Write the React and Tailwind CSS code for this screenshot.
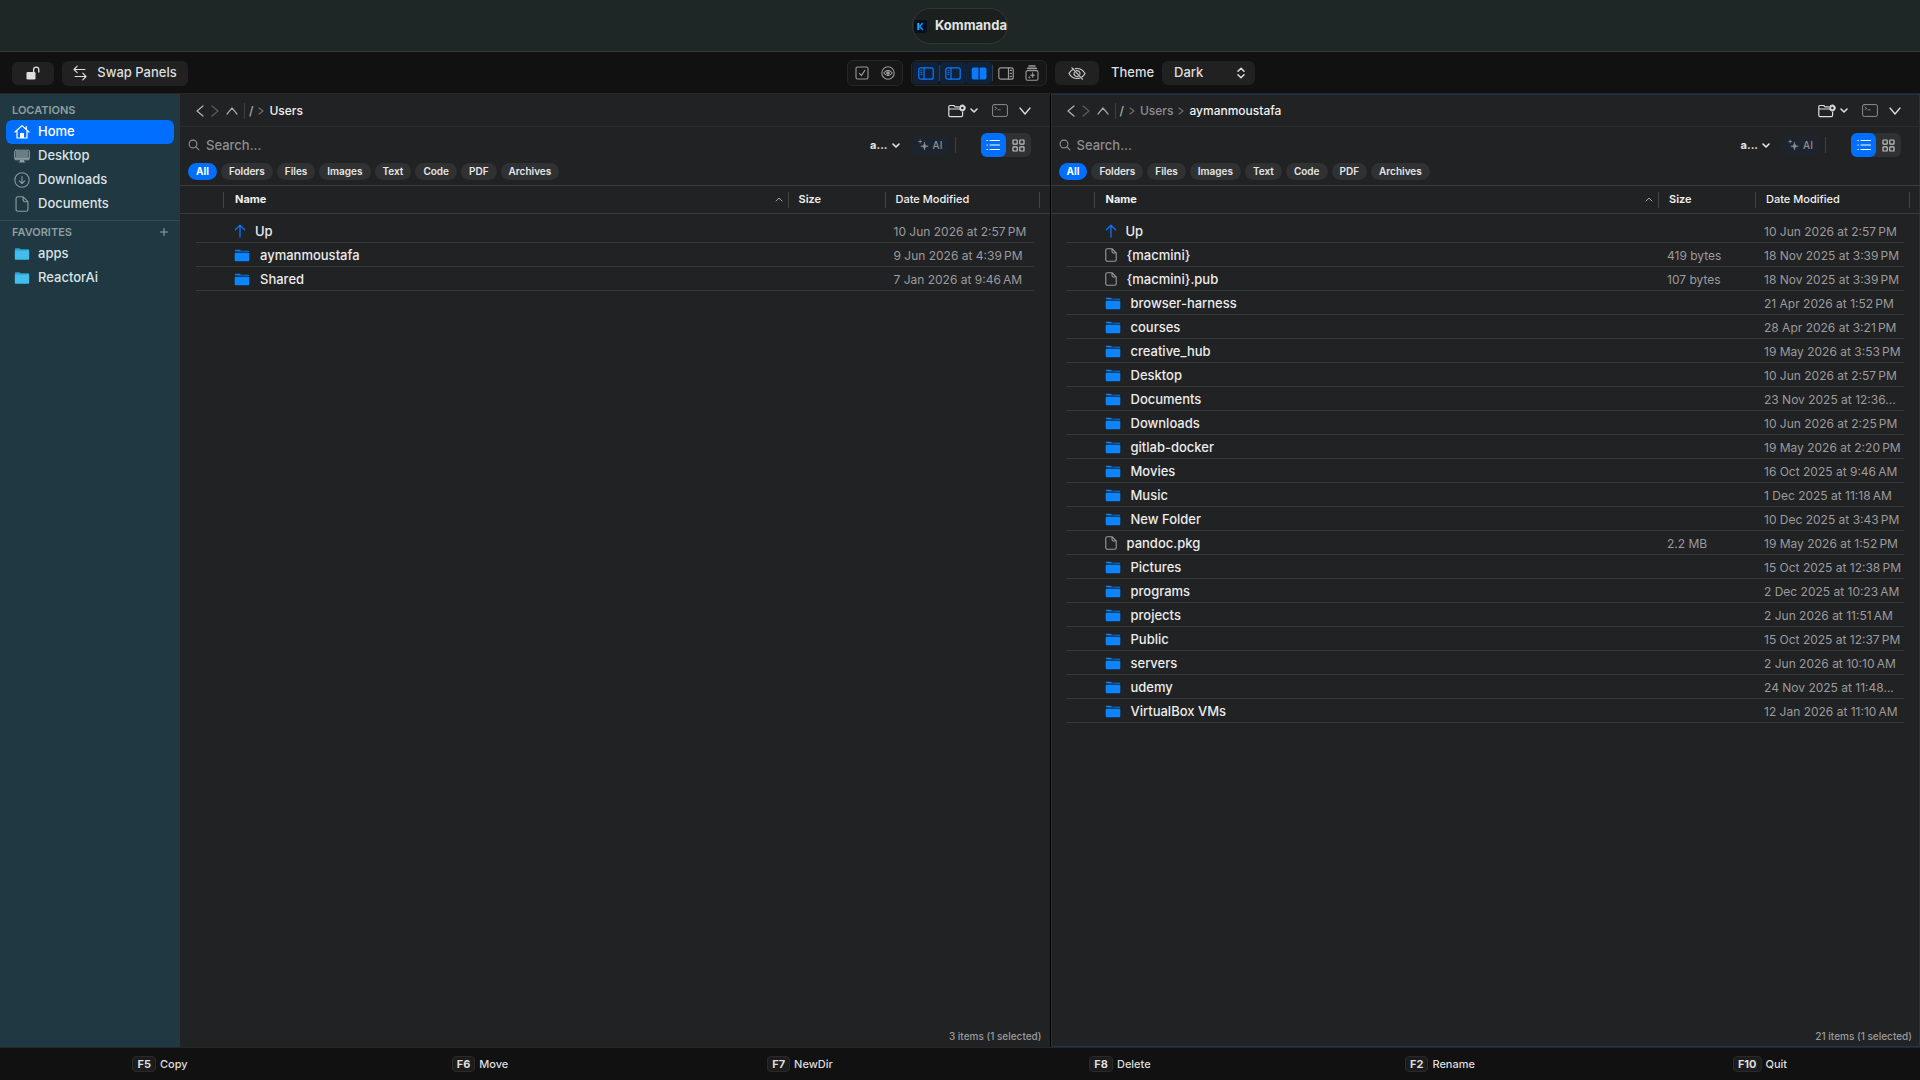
import React from "react";

const Svg = ({ w, h, vb, className = "", sw = 1, children }) => (
  <svg
    width={w}
    height={h}
    viewBox={vb || `0 0 ${w} ${h}`}
    fill="none"
    stroke="currentColor"
    strokeWidth={sw}
    strokeLinecap="round"
    strokeLinejoin="round"
    className={`shrink-0 ${className}`}
    aria-hidden="true"
  >
    {children}
  </svg>
);

/* ---------- icons ---------- */

const AppIcon = () => (
  <Svg w={13} h={13}>
    <rect width="13" height="13" rx="2" fill="#03101f" stroke="none" />
    <path d="M4.3 3v7" stroke="#1fa8ff" strokeWidth="2" strokeLinecap="butt" />
    <path d="M8.8 3L5.6 6.4 8.9 10" stroke="#1684e8" strokeWidth="1.7" strokeLinecap="butt" />
  </Svg>
);

const LockOpenIcon = () => (
  <Svg w={14} h={14} sw={1.3}>
    <rect x="0.5" y="6" width="9" height="7.5" rx="1.3" fill="currentColor" stroke="none" />
    <path d="M7.6 6V3.8a2.6 2.6 0 0 1 5.2 0V6" />
  </Svg>
);

const SwapIcon = () => (
  <Svg w={14} h={16} sw={1.1}>
    <path d="M1 4.5h11M4.2 1.2L1 4.5l3.2 3.2M2 11.5h11M9.8 8.2l3.2 3.3-3.2 3.3" />
  </Svg>
);

const CheckSquareIcon = () => (
  <Svg w={14} h={14} sw={1.1}>
    <rect x="1" y="1" width="12" height="12" rx="1.5" />
    <path d="M4.4 7.4l2 2.2 3.4-5.2" />
  </Svg>
);

const EyeCircleIcon = () => (
  <Svg w={14} h={14} sw={1.1}>
    <circle cx="7" cy="7" r="6.2" />
    <path d="M2.8 7c1.3-1.8 2.7-2.6 4.2-2.6S9.900 5.200 11.200 7C9.900 8.800 8.500 9.600 7 9.600S4.100 8.800 2.800 7z" />
    <circle cx="7" cy="7" r="1.3" fill="currentColor" />
  </Svg>
);

const SidebarLeftIcon = () => (
  <Svg w={16} h={13} sw={1.2}>
    <rect x="0.8" y="0.8" width="14.4" height="11.4" rx="2" />
    <path d="M6 1v11" />
    <path d="M2.8 3.4h1.200M2.8 5.400h1.200M2.8 7.400h1.200" strokeWidth="0.900" />
  </Svg>
);

const SplitIcon = () => (
  <Svg w={16} h={13}>
    <path
      d="M2.500 0.500h5v12h-5a1.800 1.800 0 0 1-1.800-1.800V2.300A1.800 1.800 0 0 1 2.500 0.500zM8.700 0.500h5a1.800 1.800 0 0 1 1.800 1.800v8.400a1.800 1.800 0 0 1-1.800 1.800h-5z"
      fill="currentColor"
      stroke="none"
    />
  </Svg>
);

const SidebarRightIcon = () => (
  <Svg w={16} h={13} sw={1.2}>
    <rect x="0.8" y="0.8" width="14.4" height="11.4" rx="2" />
    <path d="M10.500 1v11M12.300 3.400h1.100M12.300 6.400h1.100M12.300 9.400h1.100" />
  </Svg>
);

const StackIcon = () => (
  <Svg w={14} h={16} sw={1.1}>
    <path d="M4 1h6" strokeWidth="1.4" />
    <path d="M2.600 3.400h8.800" strokeWidth="1.600" />
    <rect x="1" y="5.600" width="12" height="9.600" rx="1.500" />
    <path d="M7.600 7.400c.2 1.800.9 2.600 2.600 2.800-1.700.2-2.400 1-2.600 2.800-.2-1.800-.9-2.600-2.600-2.800 1.700-.2 2.400-1 2.600-2.800z" fill="currentColor" strokeWidth="0.400" />
    <path d="M4.400 11.600v1.600M3.600 12.400h1.600" strokeWidth="0.700" />
  </Svg>
);

const EyeOffIcon = () => (
  <Svg w={18} h={13} sw={1.2}>
    <path d="M5.400 2.300C3.500 3.200 2 4.700 1 6.500c1.900 3.300 4.700 5 8 5 1.100 0 2.100-.2 3-.5M7.300 1.700c.5-.1 1.100-.2 1.700-.2 3.300 0 6.100 1.700 8 5-.8 1.400-1.800 2.500-3 3.400" />
    <path d="M6.300 5.400a3 3 0 0 0 3.900 3.900M8.400 3.600a3 3 0 0 1 3.500 3.600M4 .8l10.400 11.400" />
  </Svg>
);

const UpDownIcon = () => (
  <Svg w={8} h={12} sw={1.5}>
    <path d="M1 4.200l3-3 3 3M1 7.800l3 3 3-3" />
  </Svg>
);

const HomeIcon = () => (
  <Svg w={16} h={16} sw={1.2}>
    <path d="M1 8l7-6.400L15 8M3 6.700V14h10V6.700M12.300 5V2.600" />
    <path d="M6 14V9h4v5z" fill="currentColor" stroke="none" />
  </Svg>
);

const DesktopIcon = () => (
  <Svg w={16} h={14}>
    <rect x="0.600" y="1.200" width="14.800" height="9.600" rx="1.200" />
    <path d="M1.600 2h12.800v6.600H1.600z" fill="currentColor" stroke="none" opacity="0.700" />
    <path d="M1 8.600h14v2H1zM6 11h4v1.600h1.200v.8H4.800v-.8H6z" fill="currentColor" stroke="none" />
  </Svg>
);

const DownloadIcon = () => (
  <Svg w={16} h={16} sw={1.100}>
    <circle cx="8" cy="8" r="7.200" />
    <path d="M8 4.500v7M5.300 8.900L8 11.500l2.700-2.600" />
  </Svg>
);

const DocIcon = ({ small }) => (
  <Svg w={small ? 12 : 16} h={small ? 14 : 16} vb={small ? "0 0 12 14" : "-1 0 14 14"} sw={small ? 1.1 : 1}>
    <path d="M7 .7H2.300A1.500 1.500 0 0 0 .8 2.200v9.600a1.500 1.500 0 0 0 1.500 1.500h7.400a1.500 1.500 0 0 0 1.500-1.500V5zM7 .7V3.500A1.500 1.500 0 0 0 8.500 5h2.700" />
  </Svg>
);

const CyanFolderIcon = () => (
  <Svg w={16} h={14}>
    <path d="M1 1.200h4.400l1.200 1H15v2H1z" fill="#2b9fca" stroke="none" />
    <path d="M.8 3.400h14.400v8.400a.9.9 0 0 1-.9.900H1.700a.9.900 0 0 1-.9-.9z" fill="#43bdec" stroke="none" />
  </Svg>
);

const BlueFolderIcon = () => (
  <Svg w={16} h={13}>
    <path d="M.7 2.200c0-.8.500-1.400 1.300-1.400h3.300c.6 0 .8.200 1.300.6.300.2.500.3 1 .3H14c.8 0 1.300.4 1.300 1.100z" fill="#0a84ff" stroke="none" />
    <path d="M.7 4h14.600v6.900c0 .8-.5 1.300-1.300 1.300H2c-.8 0-1.300-.5-1.300-1.300z" fill="#0a84ff" stroke="none" />
    <path d="M1.500 3.500h13" stroke="#14406f" strokeWidth="1" strokeLinecap="butt" />
  </Svg>
);

const UpArrowIcon = () => (
  <Svg w={12} h={14} sw={1.300}>
    <path d="M6 13V1.200M1.400 5.800L6 1.200l4.600 4.600" />
  </Svg>
);

const Chevron = ({ dir, w, h, sw = 1.200, className }) => {
  const paths = {
    left: `M${w - 1} 1L1 ${h / 2}L${w - 1} ${h - 1}`,
    right: `M1 1L${w - 1} ${h / 2}L1 ${h - 1}`,
    up: `M1 ${h - 1}L${w / 2} 1L${w - 1} ${h - 1}`,
    down: `M1 1L${w / 2} ${h - 1}L${w - 1} 1`,
  };
  return (
    <Svg w={w} h={h} sw={sw} className={className}>
      <path d={paths[dir]} />
    </Svg>
  );
};

const FolderGearIcon = () => (
  <Svg w={18} h={14} sw={1.200}>
    <path d="M10.500 2.800H7L5.800 1.500H2A1.300 1.300 0 0 0 .8 2.800v8.500A1.400 1.400 0 0 0 2.200 12.700h11a1.400 1.400 0 0 0 1.400-1.400V8M1 5h9.500" />
    <circle cx="14.300" cy="4" r="2.100" strokeWidth="1.700" />
    <circle cx="14.300" cy="4" r="3.100" strokeWidth="0.900" strokeDasharray="1.200 1.200" />
  </Svg>
);

const TerminalIcon = () => (
  <Svg w={16} h={13}>
    <rect x="0.600" y="0.600" width="14.800" height="11.800" rx="1.600" />
    <path d="M3 3l1.800 1.300L3 5.600M6 5.800h2.200" strokeWidth="0.900" />
  </Svg>
);

const SearchIcon = () => (
  <Svg w={12} h={12} sw={1.100}>
    <circle cx="5" cy="5" r="3.900" />
    <path d="M7.900 7.900l3 3" />
  </Svg>
);

const SparkleIcon = () => (
  <Svg w={11} h={12} sw={0.600}>
    <path d="M6.500 3.400c.3 2.600 1.100 3.500 3.700 3.800-2.600.3-3.400 1.200-3.700 3.800-.3-2.600-1.100-3.500-3.700-3.800 2.600-.3 3.400-1.200 3.700-3.800z" fill="currentColor" />
    <path d="M2.200 1v3M.7 2.500h3" strokeWidth="0.800" />
  </Svg>
);

const ListIcon = () => (
  <Svg w={14} h={12} sw={1.200}>
    <path d="M4 1.500h9.400M4 6h9.400M4 10.500h9.400M.9 1.500h.4M.9 6h.4M.9 10.500h.4" />
  </Svg>
);

const GridIcon = () => (
  <Svg w={13} h={13} sw={1.200}>
    <rect x="1" y="1" width="4.200" height="4.200" rx="0.600" />
    <rect x="7.800" y="1" width="4.200" height="4.200" rx="0.600" />
    <rect x="1" y="7.800" width="4.200" height="4.200" rx="0.600" />
    <rect x="7.800" y="7.800" width="4.200" height="4.200" rx="0.600" />
  </Svg>
);

/* ---------- data ---------- */

const NNBSP = "\u202f";
const f = (name, date, time, kind = "folder", size = "") => ({
  name,
  date: `${date} at ${time.replace(" ", NNBSP)}`,
  kind,
  size,
});

const leftRows = [
  f("Up", "10 Jun 2026", "2:57 PM", "up"),
  f("aymanmoustafa", "9 Jun 2026", "4:39 PM"),
  f("Shared", "7 Jan 2026", "9:46 AM"),
];

const rightRows = [
  f("Up", "10 Jun 2026", "2:57 PM", "up"),
  f("{macmini}", "18 Nov 2025", "3:39 PM", "file", "419 bytes"),
  f("{macmini}.pub", "18 Nov 2025", "3:39 PM", "file", "107 bytes"),
  f("browser-harness", "21 Apr 2026", "1:52 PM"),
  f("courses", "28 Apr 2026", "3:21 PM"),
  f("creative_hub", "19 May 2026", "3:53 PM"),
  f("Desktop", "10 Jun 2026", "2:57 PM"),
  f("Documents", "23 Nov 2025", "12:36..."),
  f("Downloads", "10 Jun 2026", "2:25 PM"),
  f("gitlab-docker", "19 May 2026", "2:20 PM"),
  f("Movies", "16 Oct 2025", "9:46 AM"),
  f("Music", "1 Dec 2025", "11:18 AM"),
  f("New Folder", "10 Dec 2025", "3:43 PM"),
  f("pandoc.pkg", "19 May 2026", "1:52 PM", "file", "2.2 MB"),
  f("Pictures", "15 Oct 2025", "12:38 PM"),
  f("programs", "2 Dec 2025", "10:23 AM"),
  f("projects", "2 Jun 2026", "11:51 AM"),
  f("Public", "15 Oct 2025", "12:37 PM"),
  f("servers", "2 Jun 2026", "10:10 AM"),
  f("udemy", "24 Nov 2025", "11:48..."),
  f("VirtualBox VMs", "12 Jan 2026", "11:10 AM"),
];

const filters = ["All", "Folders", "Files", "Images", "Text", "Code", "PDF", "Archives"];

const shortcuts = [
  ["F5", "Copy"],
  ["F6", "Move"],
  ["F7", "NewDir"],
  ["F8", "Delete"],
  ["F2", "Rename"],
  ["F10", "Quit"],
];

/* ---------- parts ---------- */

const ToolButton = ({ label, active, children }) => (
  <button
    type="button"
    aria-label={label}
    className={`flex h-[22px] w-[26px] items-center justify-center rounded ${
      active ? "bg-[#10223a] text-[#0a7aff]" : "text-[#9a9a9a]"
    }`}
  >
    {children}
  </button>
);

const Toolbar = () => (
  <div className="flex h-[42px] shrink-0 items-center border-b border-[#262626] bg-[#111111] pl-3 pr-1.5 pt-px text-[13px] font-medium text-[#dedede]">
    <div className="flex items-center gap-2">
      <button type="button" aria-label="Unlock" className="flex h-[23px] w-[42px] items-center justify-center rounded-md bg-[#212121]">
        <LockOpenIcon />
      </button>
      <button type="button" className="flex h-[25px] w-[126px] items-center justify-center gap-2.5 rounded-md bg-[#212121]">
        <SwapIcon />
        Swap Panels
      </button>
    </div>
    <div className="flex-1" />
    <div className="flex items-center gap-2">
      <div className="flex h-[26px] items-center rounded-md border border-[#262626] bg-[#171717] px-px">
        <ToolButton label="Select"><CheckSquareIcon /></ToolButton>
        <ToolButton label="Preview"><EyeCircleIcon /></ToolButton>
      </div>
      <div className="flex h-[26px] items-center rounded-md border border-[#262626] bg-[#171717] px-px">
        <ToolButton label="Sidebar" active><SidebarLeftIcon /></ToolButton>
        <span className="h-4 w-px bg-[#33404f]" />
        <ToolButton label="Left panel" active><SidebarLeftIcon /></ToolButton>
        <ToolButton label="Dual panel" active><SplitIcon /></ToolButton>
        <span className="h-4 w-px bg-[#33404f]" />
        <ToolButton label="Inspector"><SidebarRightIcon /></ToolButton>
        <ToolButton label="Collections"><StackIcon /></ToolButton>
      </div>
      <button type="button" aria-label="Hide hidden files" className="flex h-6 w-11 items-center justify-center rounded-md bg-[#212121] text-[#c9c9c9]">
        <EyeOffIcon />
      </button>
      <label htmlFor="theme" className="pl-1">Theme</label>
      <div className="grid h-6 w-[93px] items-center rounded-md bg-[#212121]">
        <select id="theme" className="col-start-1 row-start-1 h-6 appearance-none bg-transparent pl-3 outline-none">
          <option>Dark</option>
        </select>
        <span className="pointer-events-none col-start-1 row-start-1 mr-2.5 justify-self-end">
          <UpDownIcon />
        </span>
      </div>
    </div>
    <div className="flex-1" />
  </div>
);

const SideItem = ({ icon, label, active }) => (
  <li>
    <a
      href="#"
      className={`mx-1.5 flex h-6 items-center gap-2 rounded-md px-2 ${
        active ? "bg-[#006fff] text-white" : "text-[#dce2e4]"
      }`}
    >
      <span className={`flex w-4 justify-center ${active ? "text-white" : "text-[#8b9aa0]"}`}>{icon}</span>
      {label}
    </a>
  </li>
);

const Sidebar = () => (
  <aside className="w-[180px] shrink-0 bg-[#1f3842] text-[13px] font-medium">
    <h2 className="flex h-[25px] items-center px-3 pt-1.5 text-[11px] font-semibold text-[#909ea3]">LOCATIONS</h2>
    <ul>
      <SideItem icon={<HomeIcon />} label="Home" active />
      <SideItem icon={<DesktopIcon />} label="Desktop" />
      <SideItem icon={<DownloadIcon />} label="Downloads" />
      <SideItem icon={<DocIcon />} label="Documents" />
    </ul>
    <div className="mt-1 flex h-[22px] items-center justify-between border-t border-[#344b55] px-3 pt-px text-[#909ea3]">
      <h2 className="text-[11px] font-semibold">FAVORITES</h2>
      <button type="button" aria-label="Add favorite">
        <Svg w={8} h={8} sw={1.100}><path d="M4 .5v7M.5 4h7" /></Svg>
      </button>
    </div>
    <ul>
      <SideItem icon={<CyanFolderIcon />} label="apps" />
      <SideItem icon={<CyanFolderIcon />} label="ReactorAi" />
    </ul>
  </aside>
);

const NameCell = ({ row }) => (
  <div className="flex items-center pl-2.5 text-[13px] font-medium text-[#ececec]">
    {row.kind === "up" && <span className="w-[21px] text-[#0a75ff]"><UpArrowIcon /></span>}
    {row.kind === "file" && <span className="w-[22px] text-[#9a9a9a]"><DocIcon small /></span>}
    {row.kind === "folder" && <span className="w-[26px]"><BlueFolderIcon /></span>}
    {row.name}
  </div>
);

const FileTable = ({ rows }) => (
  <table className="w-full table-fixed border-separate border-spacing-0 text-left">
    <colgroup>
      <col className="w-4" />
      <col className="w-7" />
      <col />
      <col className="w-[97px]" />
      <col className="w-[148px]" />
      <col className="w-1.5" />
      <col className="w-2.5" />
    </colgroup>
    <thead className="text-[11px] text-[#f0f0f0]">
      <tr className="h-[29px]">
        <td colSpan={2} className="border-y border-[#3a3b3d] p-0">
          <div className="ml-auto h-4 w-px bg-[#434446]" />
        </td>
        <th scope="col" className="border-y border-[#3a3b3d] p-0 font-bold">
          <div className="flex h-4 items-center justify-between border-r border-[#434446] pl-[11px] pr-[5px]">
            Name
            <Chevron dir="up" w={8} h={5} sw={1} className="text-[#a5a5a5]" />
          </div>
        </th>
        <th scope="col" className="border-y border-[#3a3b3d] p-0 font-semibold">
          <div className="flex h-4 items-center border-r border-[#434446] pl-2.5">Size</div>
        </th>
        <th scope="col" colSpan={2} className="border-y border-[#3a3b3d] p-0 font-medium">
          <div className="flex h-4 items-center border-r border-[#434446] pl-2.5">Date Modified</div>
        </th>
        <td className="border-y border-[#3a3b3d] p-0" />
      </tr>
    </thead>
    <tbody className="text-xs text-[#9b9b9d]">
      <tr className="h-[5px]"><td colSpan={7} className="p-0" /></tr>
      {rows.map((row) => (
        <tr key={row.name} className="h-6">
          <td className="p-0" />
          <td className="border-b border-[#38393b] p-0" />
          <td className="border-b border-[#38393b] p-0 pt-0.5"><NameCell row={row} /></td>
          <td className="border-b border-[#38393b] p-0 pl-2 pt-0.5">{row.size}</td>
          <td className="whitespace-nowrap border-b border-[#38393b] p-0 pl-2 pt-0.5">{row.date}</td>
          <td colSpan={2} className="p-0" />
        </tr>
      ))}
    </tbody>
  </table>
);

const Panel = ({ path, rows, status, active }) => (
  <section
    className={`flex min-w-0 flex-1 flex-col bg-[#212224] ${
      active ? "shadow-[inset_0_0_0_1px_#1b3355]" : "border-r border-black"
    }`}
  >
    <div className="flex h-[33px] items-center justify-between border-b border-[#2a2b2d] pl-4 pr-[19px] pt-px">
      <nav className="flex items-center text-xs font-medium text-[#8e8e90]">
        <button type="button" aria-label="Back" className="text-[#b5b5b5]"><Chevron dir="left" w={8} h={12} /></button>
        <button type="button" aria-label="Forward" className="ml-[7px] text-[#5c5d5f]"><Chevron dir="right" w={8} h={12} /></button>
        <button type="button" aria-label="Parent folder" className="ml-[7px] text-[#a5a5a5]"><Chevron dir="up" w={12} h={8} /></button>
        <span className="ml-1.5 mr-1 h-4 w-px bg-[#3f4042]" />
        {path.map((part, i) => (
          <React.Fragment key={part}>
            {i > 0 && <Chevron dir="right" w={6} h={8} className="mx-[5px] text-[#6c6c6e]" />}
            <a href="#" className={i === path.length - 1 ? "text-[#f0f0f0]" : i === 0 ? "text-[#b0b0b0]" : ""}>{part}</a>
          </React.Fragment>
        ))}
      </nav>
      <div className="flex items-center text-[#dcdcdc]">
        <button type="button" aria-label="Folder actions" className="flex items-center gap-1">
          <FolderGearIcon />
          <Chevron dir="down" w={8} h={5} sw={1.600} />
        </button>
        <button type="button" aria-label="Terminal" className="ml-[14px] text-[#8e8e90]"><TerminalIcon /></button>
        <button type="button" aria-label="More" className="ml-[11px]"><Chevron dir="down" w={12} h={8} sw={1.300} /></button>
      </div>
    </div>

    <div className="flex h-9 items-center pl-2 pr-[19px]">
      <label className="flex flex-1 items-center gap-1.5 text-[#8e8e90]">
        <SearchIcon />
        <input
          type="text"
          placeholder="Search..."
          aria-label="Search"
          className="w-full bg-transparent pt-px text-[13px] font-medium outline-none placeholder:text-[#8e8e90]"
        />
      </label>
      <button type="button" className="flex items-center gap-1 text-[11px] font-bold text-[#e6e6e6]">
        a...
        <Chevron dir="down" w={8} h={5} sw={1.600} />
      </button>
      <button type="button" className="ml-3 flex h-[19px] w-[37px] items-center justify-center gap-1 rounded bg-[#1e242e] text-[10px] font-medium text-[#8b8f96]">
        <SparkleIcon />
        AI
      </button>
      <span className="ml-1.5 mr-[25px] h-4 w-px bg-[#3f4042]" />
      <div className="flex h-6 w-[50px] rounded-md bg-[#303133] text-[#c4c4c4]">
        <button type="button" aria-label="List view" className="flex w-[25px] items-center justify-center rounded-md bg-[#006fff] text-white">
          <ListIcon />
        </button>
        <button type="button" aria-label="Grid view" className="flex w-[25px] items-center justify-center">
          <GridIcon />
        </button>
      </div>
    </div>

    <div className="flex gap-1 pb-[5px] pl-2 text-[10px] font-semibold leading-[17px] text-[#e6e6e6]">
      {filters.map((name, i) => (
        <button
          key={name}
          type="button"
          className={`rounded-full px-2 ${i === 0 ? "bg-[#006fff] font-bold text-white" : "bg-[#303133]"}`}
        >
          {name}
        </button>
      ))}
    </div>

    <FileTable rows={rows} />
    <div className="flex-1" />
    <p className="pb-[3px] pr-2 text-right text-[10px] font-medium leading-4 text-[#9a9a9c]">{status}</p>
  </section>
);

export default function App() {
  return (
    <div className="flex min-h-screen flex-col bg-[#111111] font-['Inter','Liberation_Sans',sans-serif]">
      <header className="flex h-[52px] shrink-0 items-center justify-center border-b border-[#2f3940] bg-[#1f2726] pt-px">
        <h1 className="flex h-9 items-center gap-2 rounded-full border border-[#2f3938] bg-[#1b201f] pl-px text-[13px] font-bold text-[#e2e4e4]">
          <AppIcon />
          Kommanda
        </h1>
      </header>
      <Toolbar />
      <main className="flex flex-1 [&>aside]:pt-px">
        <Sidebar />
        <Panel path={["/", "Users"]} rows={leftRows} status="3 items (1 selected)" />
        <Panel path={["/", "Users", "aymanmoustafa"]} rows={rightRows} status="21 items (1 selected)" active />
      </main>
      <footer className="grid h-[33px] shrink-0 grid-cols-6 items-center border-t border-[#262728] text-[11px] font-medium text-[#dedede]">
        {shortcuts.map(([key, label]) => (
          <button key={key} type="button" className="flex items-center justify-center gap-1">
            <kbd className="rounded-sm border border-[#2a2a2a] bg-[#1c1c1c] px-1 font-['Inter','Liberation_Sans',sans-serif] text-[11px] font-bold leading-[14px]">{key}</kbd>
            {label}
          </button>
        ))}
      </footer>
    </div>
  );
}
